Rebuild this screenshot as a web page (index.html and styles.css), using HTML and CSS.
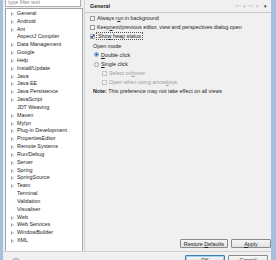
FILE: index.html
```html
<!DOCTYPE html>
<html lang="en">
<head>
  <meta charset="UTF-8">
  <title>Preferences</title>
  <link rel="stylesheet" href="styles.css">
</head>
<body>
  <div class="window">
    <div class="main">
      <div class="nav">
        <div class="filter">type filter text</div>
        <ul class="tree">
          <li class="has-kids">General</li>
          <li class="has-kids">Android</li>
          <li class="has-kids">Ant</li>
          <li>AspectJ Compiler</li>
          <li class="has-kids">Data Management</li>
          <li class="has-kids">Google</li>
          <li class="has-kids">Help</li>
          <li class="has-kids">Install/Update</li>
          <li class="has-kids">Java</li>
          <li class="has-kids">Java EE</li>
          <li class="has-kids">Java Persistence</li>
          <li class="has-kids">JavaScript</li>
          <li>JDT Weaving</li>
          <li class="has-kids">Maven</li>
          <li class="has-kids">Mylyn</li>
          <li class="has-kids">Plug-in Development</li>
          <li class="has-kids">PropertiesEditor</li>
          <li class="has-kids">Remote Systems</li>
          <li class="has-kids">Run/Debug</li>
          <li class="has-kids">Server</li>
          <li class="has-kids">Spring</li>
          <li class="has-kids">SpringSource</li>
          <li class="has-kids">Team</li>
          <li>Terminal</li>
          <li>Validation</li>
          <li>Visualiser</li>
          <li class="has-kids">Web</li>
          <li class="has-kids">Web Services</li>
          <li class="has-kids">WindowBuilder</li>
          <li class="has-kids">XML</li>
        </ul>
      </div>

      <div class="page">
        <div class="page-head">
          <span class="page-title">General</span>
          <div class="history">
            <span class="hist-arrow">&#8678;</span>
            <span class="drop">&#9662;</span>
            <span class="hist-arrow">&#8680;</span>
            <span class="drop">&#9662;</span>
            <span class="drop menu">&#9662;</span>
          </div>
        </div>

        <div class="page-body">
          <div class="row"><span class="check"></span>Always r<u>u</u>n in background</div>
          <div class="row"><span class="check"></span>Keep <u>n</u>ext/previous editor, view and perspectives dialog open</div>
          <div class="row">
            <span class="check checked">
              <svg width="5" height="5" viewBox="0 0 5 5"><path d="M0.8 2.4 L2 3.7 L4.3 0.6" fill="none" stroke="#1f3f80" stroke-width="1.1"/></svg>
            </span>
            <span class="focus">Sho<u>w</u> heap status</span>
          </div>
          <div class="group">
            <div class="row label">Open mode</div>
            <div class="row"><span class="radio on"></span><u>D</u>ouble click</div>
            <div class="row"><span class="radio"></span><u>S</u>ingle click</div>
            <div class="row sub disabled"><span class="check"></span>Select on <u>h</u>over</div>
            <div class="row sub disabled"><span class="check"></span>Open when using arrow <u>k</u>eys</div>
          </div>
          <div class="row note"><b>Note:</b>&nbsp;This preference may not take effect on all views</div>
        </div>

        <div class="page-buttons">
          <button class="btn">Restore <u>D</u>efaults</button>
          <button class="btn">&nbsp;<u>A</u>pply&nbsp;</button>
        </div>
      </div>
    </div>

    <div class="footer">
      <span class="help">?</span>
      <div class="footer-buttons">
        <button class="btn default">OK</button>
        <button class="btn">Cancel</button>
      </div>
    </div>
  </div>
</body>
</html>
```

FILE: styles.css
```css
html, body {
  margin: 0;
  height: 100%;
  overflow: hidden;
}
body {
  background: #f0f0f0;
  font-family: "Liberation Sans", Arial, sans-serif;
  font-size: 5.4px;
  color: #1e1e1e;
}
.window {
  height: 260px;
  box-sizing: border-box;
  border-left: 3px solid #a6bfdc;
  border-right: 5px solid #a6bfdc;
  display: flex;
  flex-direction: column;
}
.main {
  height: 251px;
  display: flex;
  flex: none;
}

/* left side: filter + tree */
.nav {
  width: 80px;
  padding-left: 2px;
  box-sizing: border-box;
  display: flex;
  flex-direction: column;
}
.filter {
  height: 13px;
  margin-top: -6px;
  margin-right: 2px;
  box-sizing: border-box;
  border: 1px solid #abadb3;
  background: #fff;
  color: #8a8a8a;
  padding: 4px 0 0 2px;
  line-height: 6px;
}
.tree {
  flex: 1;
  list-style: none;
  margin: 1px 0 0;
  padding: 1px 0 0;
  background: #fff;
  border: 1px solid #a0a4ab;
  border-bottom: none;
}
.tree li {
  height: 7.83px;
  line-height: 7.83px;
  padding-left: 11px;
  white-space: nowrap;
  position: relative;
}
.tree li.has-kids::before {
  content: "";
  position: absolute;
  left: 5px;
  top: 2px;
  border-left: 3px solid #a0a0a0;
  border-top: 2px solid transparent;
  border-bottom: 2px solid transparent;
}
.tree li.has-kids::after {
  content: "";
  position: absolute;
  left: 5.6px;
  top: 3px;
  border-left: 1.5px solid #fff;
  border-top: 1px solid transparent;
  border-bottom: 1px solid transparent;
}

/* right side: preference page */
.page {
  flex: 1;
  display: flex;
  flex-direction: column;
  border-left: 1px solid #d4d4d4;
  margin-left: 1px;
}
.page-head {
  height: 11px;
  flex: none;
  border-bottom: 1px solid #c8c8c8;
  display: flex;
  align-items: center;
  padding: 0 4px 1px 5px;
}
.page-title {
  font-weight: bold;
  flex: 1;
}
.history {
  display: flex;
  align-items: center;
  gap: 2px;
  color: #b8b8b8;
}
.hist-arrow {
  font-size: 7px;
  line-height: 7px;
}
.drop {
  font-size: 5px;
}
.drop.menu {
  color: #222;
  margin-left: 3px;
}
.page-body {
  flex: 1;
  padding: 0 0 0 5px;
}
.row {
  height: 9.1px;
  display: flex;
  align-items: center;
  white-space: nowrap;
}
.row:first-child {
  margin-top: 0.5px;
}
.check {
  width: 5px;
  height: 5px;
  box-sizing: border-box;
  border: 1px solid #9a9a9a;
  background: #f6f6f6;
  margin-right: 2px;
  flex: none;
  position: relative;
}
.check svg {
  position: absolute;
  left: -1px;
  top: -1px;
}
.check.checked {
  border-color: #b0b0b0;
  background: #fbfbfb;
}
.focus {
  outline: 1px dotted #555;
  outline-offset: 0;
  padding: 0 1px;
}
.group {
  padding-left: 3px;
}
.label {
  color: #222;
}
.radio {
  width: 5px;
  height: 5px;
  box-sizing: border-box;
  border: 1px solid #9a9a9a;
  border-radius: 50%;
  background: #f6f6f6;
  margin: 0 2px 0 1px;
  flex: none;
}
.radio.on {
  background: radial-gradient(circle, #2f6fc0 45%, #cfe0f4 60%);
  border-color: #7f9fc8;
}
.sub {
  padding-left: 9px;
}
.disabled {
  color: #9c9c9c;
}
.disabled .check {
  border-color: #c4c4c4;
  background: #f4f4f4;
}
.note {
  margin-left: 3px;
}
.page-buttons {
  display: flex;
  justify-content: flex-end;
  gap: 3px;
  padding: 0 0 3px;
  flex: none;
}
.btn {
  font: inherit;
  color: #1e1e1e;
  height: 9px;
  padding: 0 3px;
  border: 1px solid #8a8a8a;
  border-radius: 1px;
  background: linear-gradient(#f6f6f6, #e2e2e2);
  line-height: 6px;
  min-width: 40px;
}
.page-buttons .btn:first-child {
  min-width: 43px;
}

/* bottom bar */
.footer {
  flex: 1;
  border-top: 1px solid #d0d0d0;
  display: flex;
  align-items: flex-start;
  padding: 3px 3px 0 9px;
}
.help {
  width: 6px;
  height: 6px;
  margin-top: 3px;
  border: 1px solid #8a9aaa;
  border-radius: 50%;
  font-size: 5px;
  line-height: 6px;
  text-align: center;
  color: #4a6a8a;
}
.footer-buttons {
  margin-left: auto;
  display: flex;
  gap: 3px;
}
.footer .btn {
  height: 10px;
  min-width: 40px;
}
.footer .btn.default {
  border-color: #3c7fb1;
  box-shadow: inset 0 0 0 1px #9fd3f5;
}
```
